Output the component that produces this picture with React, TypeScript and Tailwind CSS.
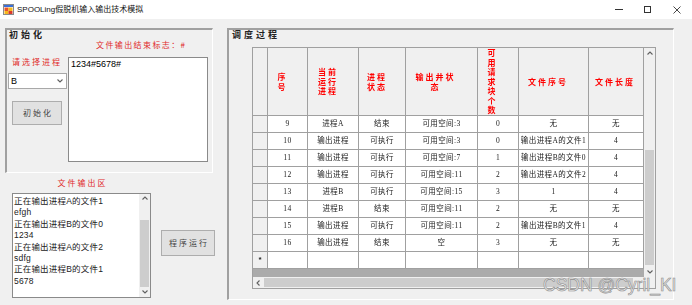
import React from "react";

const rows: string[][] = [
  ["9", "进程A", "结束", "可用空间:3", "0", "无", "无"],
  ["10", "输出进程", "可执行", "可用空间:3", "0", "输出进程A的文件1", "4"],
  ["11", "输出进程", "可执行", "可用空间:7", "1", "输出进程B的文件0", "4"],
  ["12", "输出进程", "可执行", "可用空间:11", "2", "输出进程A的文件2", "4"],
  ["13", "进程B", "可执行", "可用空间:15", "3", "1", "4"],
  ["14", "进程B", "结束", "可用空间:11", "2", "无", "无"],
  ["15", "输出进程", "可执行", "可用空间:11", "2", "输出进程B的文件1", "4"],
  ["16", "输出进程", "结束", "空", "3", "无", "无"],
];

const headers: { lines: string[]; pr: string }[] = [
  { lines: ["序", "号"], pr: "pr-[10px]" },
  { lines: ["当前", "运行", "进程"], pr: "pr-[10px]" },
  { lines: ["进程", "状态"], pr: "pr-[10px]" },
  { lines: ["输出井状", "态"], pr: "pr-[12px]" },
  { lines: ["可", "用", "请", "求", "块", "个", "数"], pr: "pr-[11px]" },
  { lines: ["文件序号"], pr: "pr-[11px]" },
  { lines: ["文件长度"], pr: "pr-[2px]" },
];

const listLines = [
  "正在输出进程A的文件1",
  "efgh",
  "正在输出进程B的文件0",
  "1234",
  "正在输出进程A的文件2",
  "sdfg",
  "正在输出进程B的文件1",
  "5678",
];

function Chevron({ dir }: { dir: "up" | "down" | "left" }) {
  const d =
    dir === "up"
      ? "M1.5 4.5 L4 2 L6.5 4.5"
      : dir === "down"
      ? "M1.5 2.5 L4 5 L6.5 2.5"
      : "M4.5 1.5 L2 4 L4.5 6.5";
  return (
    <svg width="8" height="8" viewBox="0 0 8 8">
      <path d={d} fill="none" stroke="#606060" strokeWidth="1.1" />
    </svg>
  );
}

function AppIcon() {
  return (
    <svg width="11" height="11" viewBox="0 0 11 11">
      <rect x="0.5" y="0.5" width="10" height="10" fill="#fff" stroke="#8a8a8a" />
      <rect x="1" y="1" width="9" height="2" fill="#3a6fd8" />
      <rect x="1.5" y="3.5" width="4" height="3.5" fill="#e8542a" />
      <rect x="5.5" y="3.5" width="4" height="3.5" fill="#f6b81c" />
      <rect x="1.5" y="7" width="4" height="3" fill="#f6b81c" />
      <rect x="5.5" y="7" width="4" height="3" fill="#d93a2a" />
    </svg>
  );
}

export default function App() {
  return (
    <div className="relative w-[692px] h-[305px] overflow-hidden bg-[#f0f0f0] flex flex-col font-['Liberation_Sans','Noto_Sans_CJK_SC',sans-serif]">
      {/* Title bar */}
      <div className="h-[19px] bg-white flex items-center pl-[3px] shrink-0">
        <AppIcon />
        <span className="ml-[3px] text-[8px] leading-[10px] text-[#111] font-['Liberation_Sans','Noto_Sans_CJK_SC',sans-serif]">
          SPOOLing假脱机输入输出技术模拟
        </span>
        <div className="ml-auto flex h-full pr-[1px]">
          <div className="w-[29px] h-full flex items-center justify-center">
            <div className="w-[8px] h-px bg-[#333]" />
          </div>
          <div className="w-[29px] h-full flex items-center justify-center">
            <div className="w-[7px] h-[7px] border border-[#333]" />
          </div>
          <div className="w-[29px] h-full flex items-center justify-center">
            <svg width="8" height="8" viewBox="0 0 8 8">
              <path d="M0.5 0.5 L7.5 7.5 M7.5 0.5 L0.5 7.5" stroke="#333" strokeWidth="0.9" />
            </svg>
          </div>
        </div>
      </div>

      {/* Body */}
      <div className="flex flex-row items-start pt-[9px] pl-[5px]">
        {/* Left column */}
        <div className="flex flex-col w-[208px] shrink-0">
          <div className="h-[145px] border-t-2 border-l-2 border-b border-r border-t-[#a0a0a0] border-l-[#a0a0a0] border-b-white border-r-white flex flex-col">
            <div className="h-[10px] ml-[2px] text-[9px] leading-[10px] font-bold tracking-[3px] text-[#222] font-['Noto_Sans_CJK_SC',sans-serif]">
              初始化
            </div>
            <div className="h-[9px] ml-[89px] text-[8px] leading-[9px] tracking-[1.4px] text-[#e02a2a] font-['Noto_Sans_CJK_SC',sans-serif] whitespace-nowrap">
              文件输出结束标志：#
            </div>
            <div className="flex flex-row mt-[8px]">
              <div className="w-[61px] flex flex-col shrink-0">
                <div className="h-[9px] pl-[5px] text-[8px] leading-[9px] tracking-[2px] text-[#e02a2a] font-['Noto_Sans_CJK_SC',sans-serif] whitespace-nowrap">
                  请选择进程
                </div>
                <div className="mt-[7px] ml-[1px] w-[59px] h-[16px] bg-white border border-[#a8a8a8] flex items-center justify-between pl-[2px] pr-[2px]">
                  <span className="text-[9px] leading-[10px] text-black">B</span>
                  <Chevron dir="down" />
                </div>
                <div className="mt-[12px] ml-[5px] w-[50px] h-[24px] bg-[#e1e1e1] border border-[#adadad] flex items-center justify-center text-[8px] tracking-[2px] pl-[2px] text-[#444] font-['Noto_Sans_CJK_SC',sans-serif]">
                  初始化
                </div>
              </div>
              <div className="w-[140px] h-[105px] bg-white border border-[#8a8a8a] pl-[2px] text-[9px] leading-[12px] text-black">
                1234#5678#
              </div>
            </div>
          </div>

          <div className="flex flex-row items-start">
            <div className="ml-[7px] flex flex-col items-center w-[139px]">
              <div className="mt-[5px] h-[10px] text-[8px] leading-[10px] tracking-[2px] pl-[2px] text-[#e02a2a] font-['Noto_Sans_CJK_SC',sans-serif]">
                文件输出区
              </div>
              <div className="mt-[5px] w-[139px] h-[105px] bg-white border border-[#8a8a8a] flex flex-row">
                <div className="flex-1 pl-[1px] pt-[2px] text-[8.5px] leading-[11.4px] tracking-[0.2px] text-[#222] whitespace-nowrap overflow-hidden">
                  {listLines.map((l, i) => (
                    <div key={i}>{l}</div>
                  ))}
                </div>
                <div className="w-[11px] bg-[#f0f0f0] flex flex-col">
                  <div className="h-[10px] flex items-center justify-center">
                    <Chevron dir="up" />
                  </div>
                  <div className="h-[16px]" />
                  <div className="h-[67px] mx-[1px] bg-[#cdcdcd]" />
                  <div className="h-[10px] flex items-center justify-center">
                    <Chevron dir="down" />
                  </div>
                </div>
              </div>
            </div>
            <div className="ml-[10px] mt-[57px] w-[54px] h-[26px] shrink-0 bg-[#e1e1e1] border border-[#adadad] flex items-center justify-center text-[8px] tracking-[2px] pl-[2px] text-[#444] font-['Noto_Sans_CJK_SC',sans-serif] whitespace-nowrap">
              程序运行
            </div>
          </div>
        </div>

        {/* Right box */}
        <div className="ml-[14px] w-[447px] h-[272px] shrink-0 border-t-2 border-l-2 border-b border-r border-t-[#a0a0a0] border-l-[#a0a0a0] border-b-white border-r-white flex flex-col">
          <div className="h-[10px] ml-[3px] text-[9px] leading-[10px] font-bold tracking-[3px] text-[#222] font-['Noto_Sans_CJK_SC',sans-serif]">
            调度过程
          </div>
          <div className="mt-[7px] ml-[23px] w-[404px] h-[242px] border border-[#a0a0a0] flex flex-col">
            <div className="flex flex-row h-[229px]">
              <div className="w-[391px] flex flex-col">
                <div className="grid grid-cols-[15px_40px_51px_47px_72px_41px_70px_55px] will-change-transform">
                  <div className="h-[68px] bg-[#f0f0f0] border-r border-b border-[#a0a0a0]" />
                  {headers.map((h, i) => (
                    <div
                      key={i}
                      className={`h-[68px] bg-[#f0f0f0] border-r border-b border-[#a0a0a0] flex flex-col items-center justify-center ${h.pr} text-[8px] leading-[9.5px] font-bold tracking-[2px] text-[#ff0000] font-['Noto_Sans_CJK_SC',sans-serif]`}
                    >
                      {h.lines.map((l, j) => (
                        <div key={j} className="whitespace-nowrap text-center">
                          {l}
                        </div>
                      ))}
                    </div>
                  ))}
                  {rows.map((r, ri) => (
                    <React.Fragment key={ri}>
                      <div className="h-[17px] bg-[#f0f0f0] border-r border-b border-[#a0a0a0]" />
                      {r.map((c, ci) => (
                        <div
                          key={ci}
                          className="h-[17px] bg-white border-r border-b border-[#a0a0a0] flex items-center justify-center"
                        >
                          <span className="text-[7.5px] leading-[10px] tracking-[0.4px] text-[#1a1a1a] whitespace-nowrap font-['Liberation_Serif','Noto_Sans_CJK_SC',serif]">
                            {c}
                          </span>
                        </div>
                      ))}
                    </React.Fragment>
                  ))}
                  <div className="h-[17px] bg-[#f0f0f0] border-r border-b border-[#a0a0a0] flex items-center justify-center text-[8px] font-bold text-[#222]">
                    *
                  </div>
                  {[0, 1, 2, 3, 4, 5, 6].map((k) => (
                    <div key={k} className="h-[17px] bg-white border-r border-b border-[#a0a0a0]" />
                  ))}
                </div>
                <div className="flex-1 bg-[#ababab]" />
              </div>
              <div className="w-[11px] bg-[#f0f0f0] flex flex-col">
                <div className="h-[11px] flex items-center justify-center">
                  <Chevron dir="up" />
                </div>
                <div className="h-[91px]" />
                <div className="h-[115px] mx-[1px] bg-[#cdcdcd]" />
                <div className="h-[1px]" />
                <div className="h-[11px] flex items-center justify-center">
                  <Chevron dir="down" />
                </div>
              </div>
            </div>
            <div className="flex flex-row h-[11px]">
              <div className="w-[391px] bg-[#f0f0f0] flex flex-row items-center">
                <div className="w-[11px] h-full flex items-center justify-center">
                  <Chevron dir="left" />
                </div>
                <div className="w-[369px] h-[9px] bg-[#cdcdcd]" />
              </div>
              <div className="w-[11px] bg-[#f0f0f0]" />
            </div>
          </div>
        </div>
      </div>

      {/* Watermark */}
      <div className="absolute left-[543px] top-[276px] text-[17.5px] leading-[18px] whitespace-nowrap text-[#ececec] [-webkit-text-stroke:0.6px_#8c8c8c] font-['Liberation_Sans',sans-serif]">
        CSDN @Cyril_KI
      </div>
    </div>
  );
}
